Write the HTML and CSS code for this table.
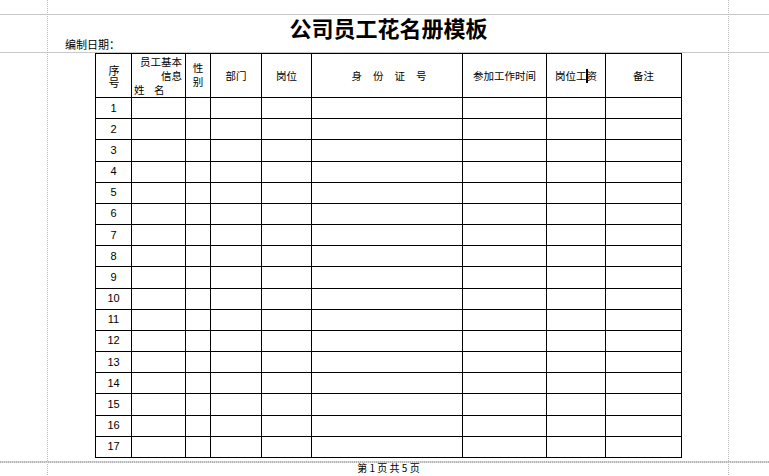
FILE: index.html
```html
<!DOCTYPE html>
<html lang="zh-CN">
<head>
<meta charset="utf-8">
<title>公司员工花名册模板</title>
<link rel="stylesheet" href="styles.css">
</head>
<body>
<div class="guides" aria-hidden="true">
  <div class="hline hline-top"></div>
  <div class="hline hline-head"></div>
  <div class="vline vline-left"></div>
  <div class="vline vline-right"></div>
  <div class="dline"></div>
</div>
<div class="sheet">
  <h1 class="title">公司员工花名册模板</h1>
  <div class="date">编制日期：</div>
  <table class="roster">
    <colgroup>
      <col class="c1"><col class="c2"><col class="c3"><col class="c4"><col class="c5"><col class="c6"><col class="c7"><col class="c8"><col class="c9">
    </colgroup>
    <thead>
      <tr class="head">
        <th class="stack seq"><span class="vert">序号</span></th>
        <th class="split">
          <span class="r">员工基本</span>
          <span class="r">信息</span>
          <span class="l">姓&nbsp;&nbsp;&nbsp;&nbsp;名</span>
        </th>
        <th class="stack sex"><span class="vert">性别</span></th>
        <th>部门</th>
        <th>岗位</th>
        <th><span class="spread"><span>身</span><span>份</span><span>证</span><span>号</span></span></th>
        <th>参加工作时间</th>
        <th>岗位工<span class="caret"></span>资</th>
        <th>备注</th>
      </tr>
    </thead>
    <tbody>
      <tr><td>1</td><td></td><td></td><td></td><td></td><td></td><td></td><td></td><td></td></tr>
      <tr><td>2</td><td></td><td></td><td></td><td></td><td></td><td></td><td></td><td></td></tr>
      <tr><td>3</td><td></td><td></td><td></td><td></td><td></td><td></td><td></td><td></td></tr>
      <tr><td>4</td><td></td><td></td><td></td><td></td><td></td><td></td><td></td><td></td></tr>
      <tr><td>5</td><td></td><td></td><td></td><td></td><td></td><td></td><td></td><td></td></tr>
      <tr><td>6</td><td></td><td></td><td></td><td></td><td></td><td></td><td></td><td></td></tr>
      <tr><td>7</td><td></td><td></td><td></td><td></td><td></td><td></td><td></td><td></td></tr>
      <tr><td>8</td><td></td><td></td><td></td><td></td><td></td><td></td><td></td><td></td></tr>
      <tr><td>9</td><td></td><td></td><td></td><td></td><td></td><td></td><td></td><td></td></tr>
      <tr><td>10</td><td></td><td></td><td></td><td></td><td></td><td></td><td></td><td></td></tr>
      <tr><td>11</td><td></td><td></td><td></td><td></td><td></td><td></td><td></td><td></td></tr>
      <tr><td>12</td><td></td><td></td><td></td><td></td><td></td><td></td><td></td><td></td></tr>
      <tr><td>13</td><td></td><td></td><td></td><td></td><td></td><td></td><td></td><td></td></tr>
      <tr><td>14</td><td></td><td></td><td></td><td></td><td></td><td></td><td></td><td></td></tr>
      <tr><td>15</td><td></td><td></td><td></td><td></td><td></td><td></td><td></td><td></td></tr>
      <tr><td>16</td><td></td><td></td><td></td><td></td><td></td><td></td><td></td><td></td></tr>
      <tr><td>17</td><td></td><td></td><td></td><td></td><td></td><td></td><td></td><td></td></tr>
    </tbody>
  </table>
  <div class="footer">第 1 页 共 5 页</div>
</div>
</body>
</html>
```

FILE: styles.css
```css
html, body {
  margin: 0;
  padding: 0;
  background: #ffffff;
}

body {
  width: 769px;
  height: 476px;
  overflow: hidden;
  position: relative;
  color: #000000;
  font-family: "Liberation Sans", "Noto Sans CJK SC", sans-serif;
}

/* print-preview guide lines */
.guides {
  position: absolute;
  inset: 0;
  pointer-events: none;
}

.hline {
  position: absolute;
  left: 0;
  right: 0;
  height: 1px;
  background: #c8c8c8;
}

.hline-top { top: 14px; }
.hline-head { top: 52px; }

.vline {
  position: absolute;
  top: 0;
  bottom: 0;
  width: 1px;
  background: repeating-linear-gradient(180deg, #b8b8b8 0 1px, transparent 1px 2px);
}

.vline-left { left: 47px; }
.vline-right { left: 728px; }

.dline {
  position: absolute;
  left: 0;
  right: 0;
  top: 461px;
  height: 2px;
  background: repeating-linear-gradient(90deg, #b4b4b4 0 1px, #dcdcdc 1px 2px);
}

.sheet {
  position: relative;
  width: 587px;
  margin-left: 95px;
}

.title {
  margin: 0;
  padding-top: 16px;
  font-family: "Noto Sans CJK SC", sans-serif;
  font-size: 22px;
  line-height: 22px;
  font-weight: 700;
  text-align: center;
}

.date {
  margin-left: -30px;
  height: 15px;
  font-family: "Noto Sans CJK SC", sans-serif;
  font-size: 11px;
  line-height: 13px;
}

.roster {
  border-collapse: separate;
  border-spacing: 0;
  table-layout: fixed;
  width: 587px;
  border-left: 1px solid #000;
  border-top: 1px solid #000;
}

.c1 { width: 36px; }
.c2 { width: 54px; }
.c3 { width: 25px; }
.c4 { width: 51px; }
.c5 { width: 50px; }
.c6 { width: 151px; }
.c7 { width: 84px; }
.c8 { width: 59px; }
.c9 { width: 76px; }

.roster th,
.roster td {
  box-sizing: border-box;
  padding: 0;
  border-right: 1px solid #000;
  border-bottom: 1px solid #000;
  text-align: center;
  vertical-align: middle;
  overflow: hidden;
  white-space: nowrap;
}

.roster tr.head { height: 43px; }

.roster th {
  font-family: "Noto Sans CJK SC", sans-serif;
  font-weight: 400;
  font-size: 10.5px;
  line-height: 13px;
}

.vert {
  display: inline-block;
  writing-mode: vertical-rl;
  text-orientation: upright;
  vertical-align: middle;
}

.roster th.seq {
  font-size: 11px;
  padding-top: 2px;
}

.seq .vert {
  letter-spacing: 1px;
  line-height: 13px;
}

.roster th.sex {
  padding-top: 3px;
}

.sex .vert {
  letter-spacing: 3.5px;
  line-height: 13px;
}

.roster th.split {
  vertical-align: top;
  padding: 1px 3px 0 2px;
  line-height: 14px;
  font-size: 10.5px;
}

.split .r,
.split .l {
  display: block;
}

.split .r { text-align: right; }
.split .l { text-align: left; }

.spread {
  display: inline-flex;
  gap: 11px;
  margin-left: 4px;
}

.caret {
  display: inline-block;
  width: 2px;
  height: 14px;
  margin: 0 -1px;
  background: #000;
  vertical-align: -3px;
}

.roster tbody tr { height: 21.176px; }

.roster tbody td {
  font-size: 11px;
  line-height: 13px;
}

.footer {
  margin-top: 4px;
  text-align: center;
  font-family: "Noto Sans CJK SC", sans-serif;
  font-size: 10px;
  line-height: 12px;
}
```
